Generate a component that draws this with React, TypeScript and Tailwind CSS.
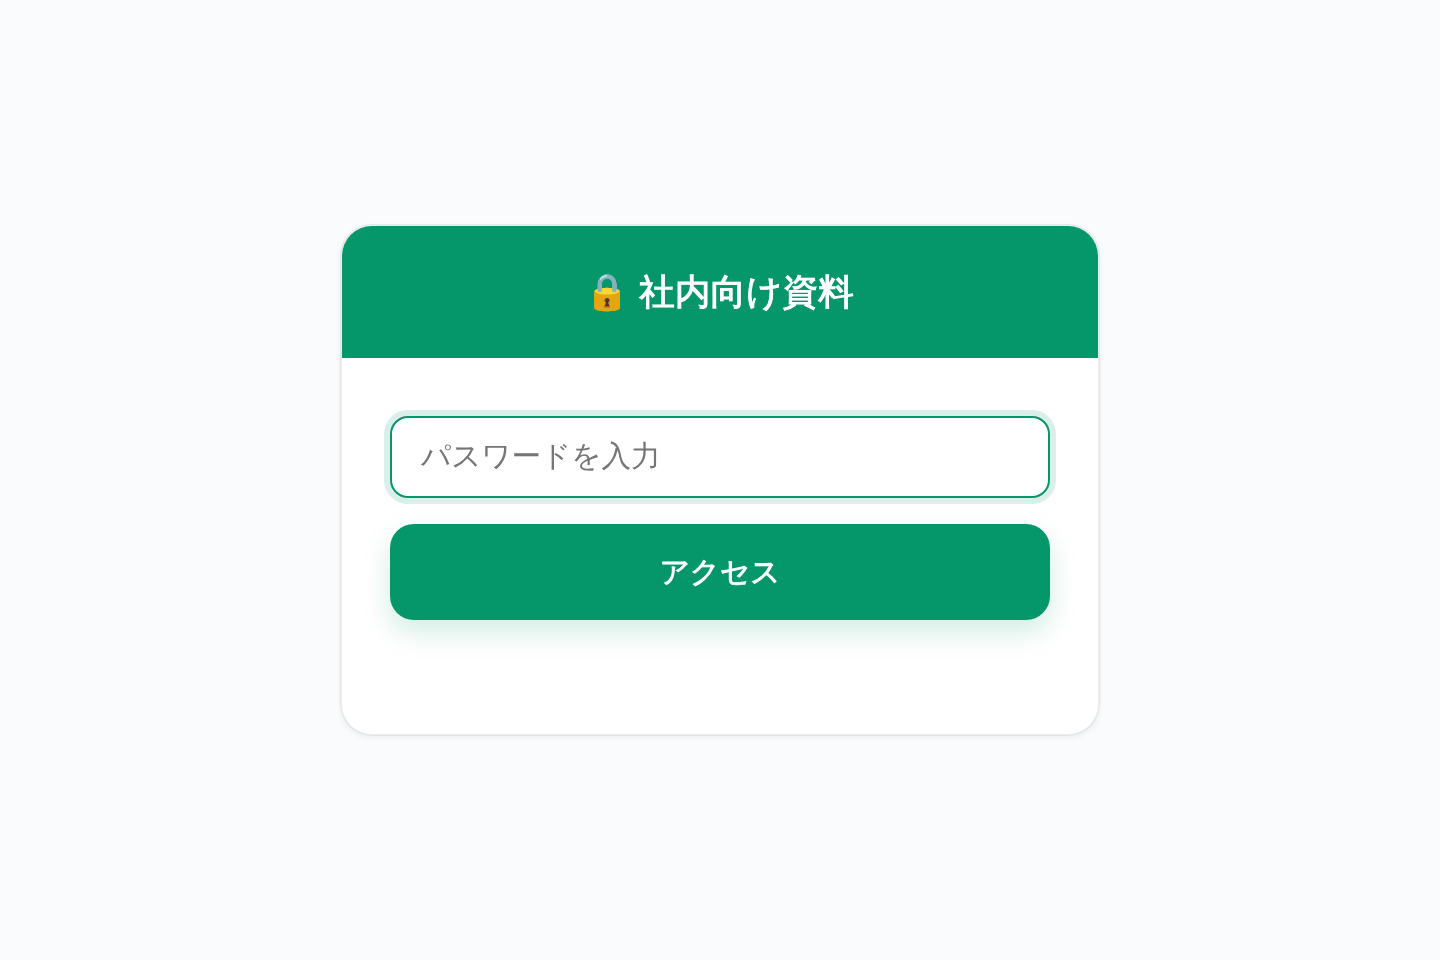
import { useState } from "react";

export default function App() {
  const [password, setPassword] = useState("");

  function handleSubmit(e: React.FormEvent) {
    e.preventDefault();
  }

  return (
    <div className="flex h-screen items-center justify-center bg-[#fafbfd] font-['Liberation_Sans','WenQuanYi_Zen_Hei','Noto_Sans_CJK_JP',sans-serif]">
      <div className="h-[512px] w-[760px] overflow-hidden rounded-[32px] border-2 border-black/6 bg-white bg-clip-padding shadow-[0_2px_6px_rgba(0,0,0,0.05)]">
        <h1 className="flex h-[132px] items-center justify-center bg-[#059669] pt-px pr-px text-[35.5px] font-normal tracking-[0.1px] text-white [-webkit-text-stroke:1.1px_white]">
          <span className="whitespace-pre">🔒 社内向け資料</span>
        </h1>
        <form onSubmit={handleSubmit} className="px-12 pt-[58px]">
          <input
            type="password"
            value={password}
            onChange={(e) => setPassword(e.target.value)}
            placeholder="パスワードを入力"
            className="block h-[82px] w-full rounded-[18px] border-2 border-[#059669] bg-white pr-7 pb-0.5 pl-[29px] text-[29.6px] shadow-[0_0_0_6px_rgba(5,150,105,0.15)] outline-none placeholder:tracking-[-0.1px] placeholder:text-[#757575]"
          />
          <button
            type="submit"
            className="mt-[26px] block h-24 w-full rounded-3xl bg-[#059669] text-[29.6px] font-normal tracking-[-0.1px] text-white shadow-[0_12px_28px_rgba(5,150,105,0.18)] [-webkit-text-stroke:0.9px_white]"
          >
            アクセス
          </button>
        </form>
      </div>
    </div>
  );
}
